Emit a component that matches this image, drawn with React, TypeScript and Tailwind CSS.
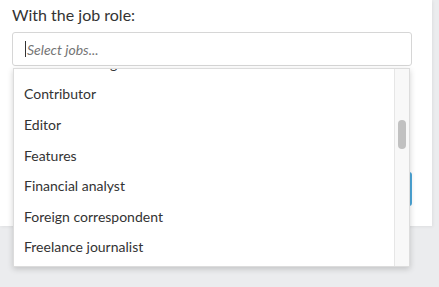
const jobs = [
  "Commissioning editor",
  "Contributor",
  "Editor",
  "Features",
  "Financial analyst",
  "Foreign correspondent",
  "Freelance journalist",
  "Graphic designer",
];

const App = () => {
  return (
    <div className="h-[287px] w-full bg-[#ebecee] font-['Lato',sans-serif]">
      {/* Panel */}
      <div className="w-[432px] h-[226px] bg-white pl-3 pr-5 pt-[3px] shadow-[1px_1px_3px_rgba(0,0,0,0.06)]">
        <label className="block text-[16px] leading-[24px] text-[#333]">
          With the job role:
        </label>

        <div className="relative mt-[5px]">
          {/* Input */}
          <div className="h-[34px] border border-[#d6d6d6] rounded-[3px] flex items-center pl-3">
            <span className="w-px h-[16px] bg-[#333] mr-px"></span>
            <span className="text-[14px] italic text-[#757575]">Select jobs...</span>
          </div>

          {/* Dropdown */}
          <div className="absolute left-px right-[2px] top-[36px] h-[199px] bg-white z-10 flex border border-[#dcdcdc] shadow-[0_2px_6px_rgba(0,0,0,0.18)]">
            <div className="flex-1 overflow-hidden">
              <div className="-mt-[21px]">
                {jobs.map((job) => (
                  <div
                    key={job}
                    className="h-[30.6px] flex items-center pl-[10px] text-[14px] text-[#333]"
                  >
                    {job}
                  </div>
                ))}
              </div>
            </div>
            {/* Scrollbar */}
            <div className="w-[15px] bg-[#f8f8f8] border-l border-[#e6e6e6] pt-[51px] flex justify-center">
              <div className="w-[8px] h-[29px] rounded-full bg-[#c1c1c1]"></div>
            </div>
          </div>
        </div>

        <div className="flex justify-end mt-[106px]">
          <button className="h-[34px] w-[96px] rounded-[3px] bg-[#4ea8d9] text-white text-[14px]">
            Search
          </button>
        </div>
      </div>
    </div>
  );
};

export default App;
